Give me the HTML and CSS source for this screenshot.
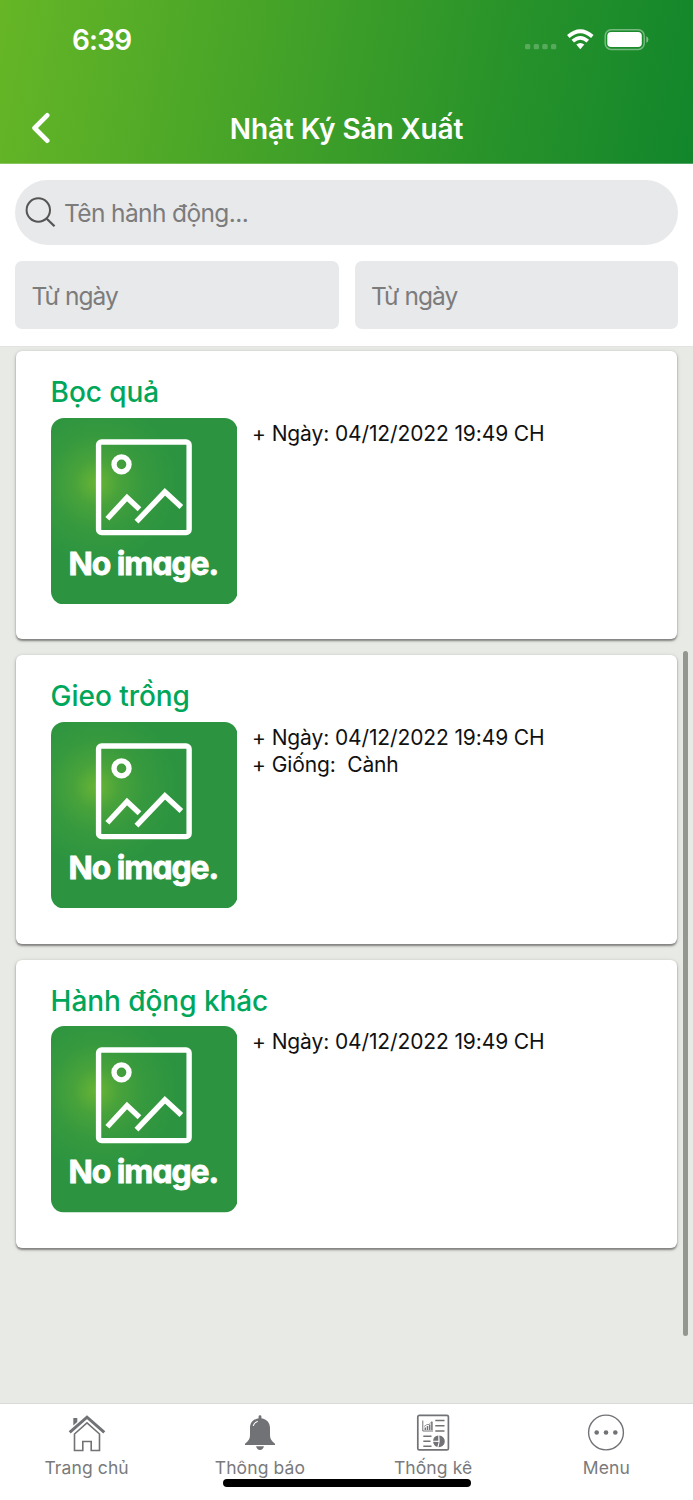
FILE: index.html
```html
<!DOCTYPE html>
<html lang="vi">
<head>
<meta charset="utf-8">
<title>Nhật Ký Sản Xuất</title>
<link rel="stylesheet" href="styles.css">
</head>
<body>
<svg width="0" height="0" class="defs" aria-hidden="true">
  <defs>
    <radialGradient id="glow" gradientUnits="userSpaceOnUse" cx="46" cy="65" r="80">
      <stop offset="0" stop-color="#68b435"/>
      <stop offset=".3" stop-color="#47a23b"/>
      <stop offset=".6" stop-color="#36993e"/>
      <stop offset="1" stop-color="#2c9440"/>
    </radialGradient>
    <symbol id="no-image" viewBox="0 0 187 187">
      <rect width="187" height="187" rx="13" fill="url(#glow)"/>
      <g fill="none" stroke="#fff">
        <rect x="47.700" y="24.1" width="90.8" height="90.8" rx="3" stroke-width="5.4"/>
        <circle cx="70.700" cy="46.5" r="7.5" stroke-width="5.4"/>
        <path d="M56.500 101 76.200 79.700 88.700 91.500M85.700 104 114.200 74 130.700 89.200" stroke-width="5.4"/>
      </g>
      <text class="no-image-text" x="17.600" y="157.300" textLength="151" lengthAdjust="spacing">No image.</text>
    </symbol>
  </defs>
</svg>
<div class="screen">
  <header class="header">
    <div class="status">
      <span class="time">6:39</span>
      <span class="indicators">
        <svg width="126" height="24" viewBox="0 0 126 24">
          <g fill="#fff" fill-opacity=".24"><rect x="1" y="15.900" width="5.300" height="5.300" rx="1.500"/><rect x="9.700" y="15.900" width="5.300" height="5.300" rx="1.500"/><rect x="18.300" y="15.900" width="5.300" height="5.300" rx="1.500"/><rect x="27" y="15.900" width="5.300" height="5.300" rx="1.500"/></g>
          <g fill="none" stroke="#fff" stroke-width="3.700"><path d="M44.300 8.500Q56.300-2 68.300 8.500"/><path d="M48.800 13.200Q56.300 6.600 63.800 13.200"/></g>
          <path d="M52.300 16.600Q56.300 13.200 60.300 16.600L56.300 21.300Z" fill="#fff"/>
          <rect x="81.200" y="1.800" width="39" height="19.600" rx="6" fill="none" stroke="#fff" stroke-opacity=".4" stroke-width="1.500"/>
          <rect x="83.300" y="4" width="34.500" height="15" rx="3.800" fill="#fff"/>
          <path d="M122.300 8.300Q124.400 9 124.400 11.500T122.300 14.700Z" fill="#fff" fill-opacity=".45"/>
        </svg>
      </span>
    </div>
    <div class="navbar">
      <svg class="back" width="20" height="32" viewBox="0 0 20 32"><path d="M16.200 3.300 3.600 16 16.200 28.700" fill="none" stroke="#fff" stroke-width="4.700" stroke-linecap="round" stroke-linejoin="round"/></svg>
      <h1 class="title">Nhật Ký Sản Xuất</h1>
    </div>
  </header>
  <section class="filters">
    <div class="search">
      <svg width="31" height="31" viewBox="0 0 31 31" fill="none" stroke="#555" stroke-width="2"><circle cx="13.300" cy="13" r="11.700"/><path d="M21.500 21.500 29.500 29.300" stroke-width="2.300"/></svg>
      <span class="search-text">Tên hành động...</span>
    </div>
    <div class="dates">
      <div class="date"><span>Từ ngày</span></div>
      <div class="date"><span>Từ ngày</span></div>
    </div>
  </section>
  <main class="list">
    <article class="card">
      <h2 class="card-title">Bọc quả</h2>
      <div class="card-body">
        <svg class="thumb"><use href="#no-image"/></svg>
        <div class="info"><p>+ Ngày: 04/12/2022 19:49 CH</p></div>
      </div>
    </article>
    <article class="card">
      <h2 class="card-title">Gieo trồng</h2>
      <div class="card-body">
        <svg class="thumb"><use href="#no-image"/></svg>
        <div class="info"><p>+ Ngày: 04/12/2022 19:49 CH</p><p>+ Giống:&nbsp; Cành</p></div>
      </div>
    </article>
    <article class="card">
      <h2 class="card-title">Hành động khác</h2>
      <div class="card-body">
        <svg class="thumb"><use href="#no-image"/></svg>
        <div class="info"><p>+ Ngày: 04/12/2022 19:49 CH</p></div>
      </div>
    </article>
    <div class="scrollbar"></div>
  </main>
  <nav class="tabs">
    <div class="tab">
      <svg width="40" height="40" viewBox="0 0 40 40" fill="none" stroke="#717276"><path d="M2.700 19.300 20 4.200 37.300 19.300" stroke-width="3"/><path d="M6.300 5H10.300V9L6.300 12.400Z" fill="#717276" stroke="none"/><path d="M7.500 37.500V21L20 9.900 32.500 21V37.500H24.200V28.500H15.800V37.500Z" stroke-width="1.600"/></svg>
      <span>Trang chủ</span>
    </div>
    <div class="tab">
      <svg width="40" height="40" viewBox="0 0 40 40"><path fill="#717276" d="M18.600 5.200V3.500Q18.600 2.200 20 2.200T21.400 3.500V5.200C27 6 30 10 30 15V22C30 26 31.500 28 35 30.800V32H5V30.800C8.500 28 10 26 10 22V15C10 10 13 6 18.600 5.200ZM16 33.300H24Q23 37 20 37T16 33.300Z"/><path d="M13.400 12.500Q14.300 9.500 17.300 8.400" fill="none" stroke="#fff" stroke-width="1.100" stroke-linecap="round"/></svg>
      <span>Thông báo</span>
    </div>
    <div class="tab">
      <svg width="40" height="40" viewBox="0 0 40 40" fill="none" stroke="#717276"><rect x="4.800" y="2.300" width="30.600" height="34.600" rx="1.500" stroke-width="1.700"/><path d="M9.800 7.500V18H20" stroke-width="1"/><path d="M12.300 17V14.500M14.500 17V13M16.700 17V11.500M18.900 17V9" stroke-width="1.500"/><path d="M11 13.500 14 11.500 16 11.500 19.300 8" stroke-width=".7"/><path d="M22.300 7.500H31.500M22.300 12.700H31.500M22.300 18H31.500M10.300 23.200H18.500M10.300 28.200H17.500M10.300 33.200H18.500" stroke-width="1.500"/><path d="M25.300 22.500A5.900 5.900 0 0 0 20.100 27.700H25.300ZM20.100 28.700A5.900 5.900 0 0 0 24.300 33.900L25.700 29ZM26.300 22.400A5.900 5.900 0 0 1 25.500 34.200L26.700 28.500Z" fill="#717276" stroke="none"/></svg>
      <span>Thống kê</span>
    </div>
    <div class="tab">
      <svg width="40" height="40" viewBox="0 0 40 40"><circle cx="20" cy="19.500" r="17.400" fill="none" stroke="#717276" stroke-width="1.400"/><g fill="#717276"><circle cx="10.700" cy="19.500" r="2.300"/><circle cx="20" cy="19.500" r="2.300"/><circle cx="29.300" cy="19.500" r="2.300"/></g></svg>
      <span>Menu</span>
    </div>
    <div class="home-bar"></div>
  </nav>
</div>
</body>
</html>
```
FILE: styles.css
```css
* { box-sizing: border-box; margin: 0; padding: 0; }
body { font-family: Inter, "Liberation Sans", sans-serif; background: #e8eae5; }
svg { display: block; flex: none; }
.defs { position: absolute; }
.screen { width: 693px; height: 1500px; display: flex; flex-direction: column; overflow: hidden; }

.header {
  height: 164px; flex: none; color: #fff;
  background: linear-gradient(100deg, #66b626 0%, #3b9d29 50%, #25912a 75%, #12862c 100%);
  box-shadow: inset 0 -1px 0 rgba(255,255,255,.25);
}
.status { height: 80px; display: flex; justify-content: space-between; padding: 0 43px 0 72px; }
.time { font-size: 28px; line-height: 80px; font-weight: 600; letter-spacing: -.8px; }
.indicators { padding-top: 28px; }
.navbar { height: 83px; display: grid; grid-template-columns: 60px 1fr 60px; align-items: center; }
.back { margin: 13px 0 0 31px; }
.title { font-size: 28px; line-height: 40px; font-weight: 600; text-align: center; letter-spacing: -.12px; padding-top: 14px; white-space: nowrap; }

.filters { height: 182px; flex: none; background: #fff; padding: 16px 15px 0; }
.search { height: 65px; border-radius: 33px; background: #e8e9eb; display: flex; align-items: center; gap: 8px; padding-left: 10px; color: #7c7c7c; font-size: 24.5px; }
.search-text { letter-spacing: -.62px; white-space: nowrap; }
.dates { display: grid; grid-template-columns: 1fr 1fr; gap: 16px; margin-top: 16px; }
.date { height: 68px; border-radius: 7px; background: #e8e9eb; color: #7c7c7c; font-size: 24.5px; line-height: 70px; padding-left: 16.500px; letter-spacing: -.9px; }

.list { flex: 1; min-height: 0; position: relative; padding: 5px 16px 0; display: flex; flex-direction: column; gap: 16px; background: #e8eae5; box-shadow: inset 0 1px 0 #e3e4e1; }
.card { height: 288.400px; flex: none; background: #fff; border-radius: 6px; padding: 20px 34.600px 0; box-shadow: 0 1.500px 2px rgba(0,0,0,.4), 0 1px 5px rgba(0,0,0,.12); }
.card-title { font-size: 28px; line-height: 42px; font-weight: 500; letter-spacing: -.05px; color: #00a65a; white-space: nowrap; }
.card-body { display: flex; gap: 15px; margin-top: 4.500px; }
.thumb { width: 186.500px; height: 186.500px; }
.no-image-text { font: 700 32px Inter, sans-serif; font-feature-settings: "cv11"; fill: #fff; stroke: #fff; stroke-width: .8px; }
.info { font-size: 21px; line-height: 27.500px; color: #111; padding-top: 2px; letter-spacing: -.12px; white-space: nowrap; }

.tabs { height: 97px; flex: none; position: relative; display: grid; grid-template-columns: repeat(4, 1fr); background: #fff; border-top: 1px solid #d7dad6; color: #7a7a7c; }
.tab { display: flex; flex-direction: column; align-items: center; padding-top: 9px; font-size: 17.500px; line-height: 24px; letter-spacing: .1px; }
.tab span { margin-top: 3px; }

.scrollbar { position: absolute; right: 5px; top: 305px; width: 5px; height: 685px; border-radius: 3px; background: #949690; }
.home-bar { position: absolute; left: 223px; top: 75px; width: 248px; height: 8px; border-radius: 4px; background: #000; }
```
